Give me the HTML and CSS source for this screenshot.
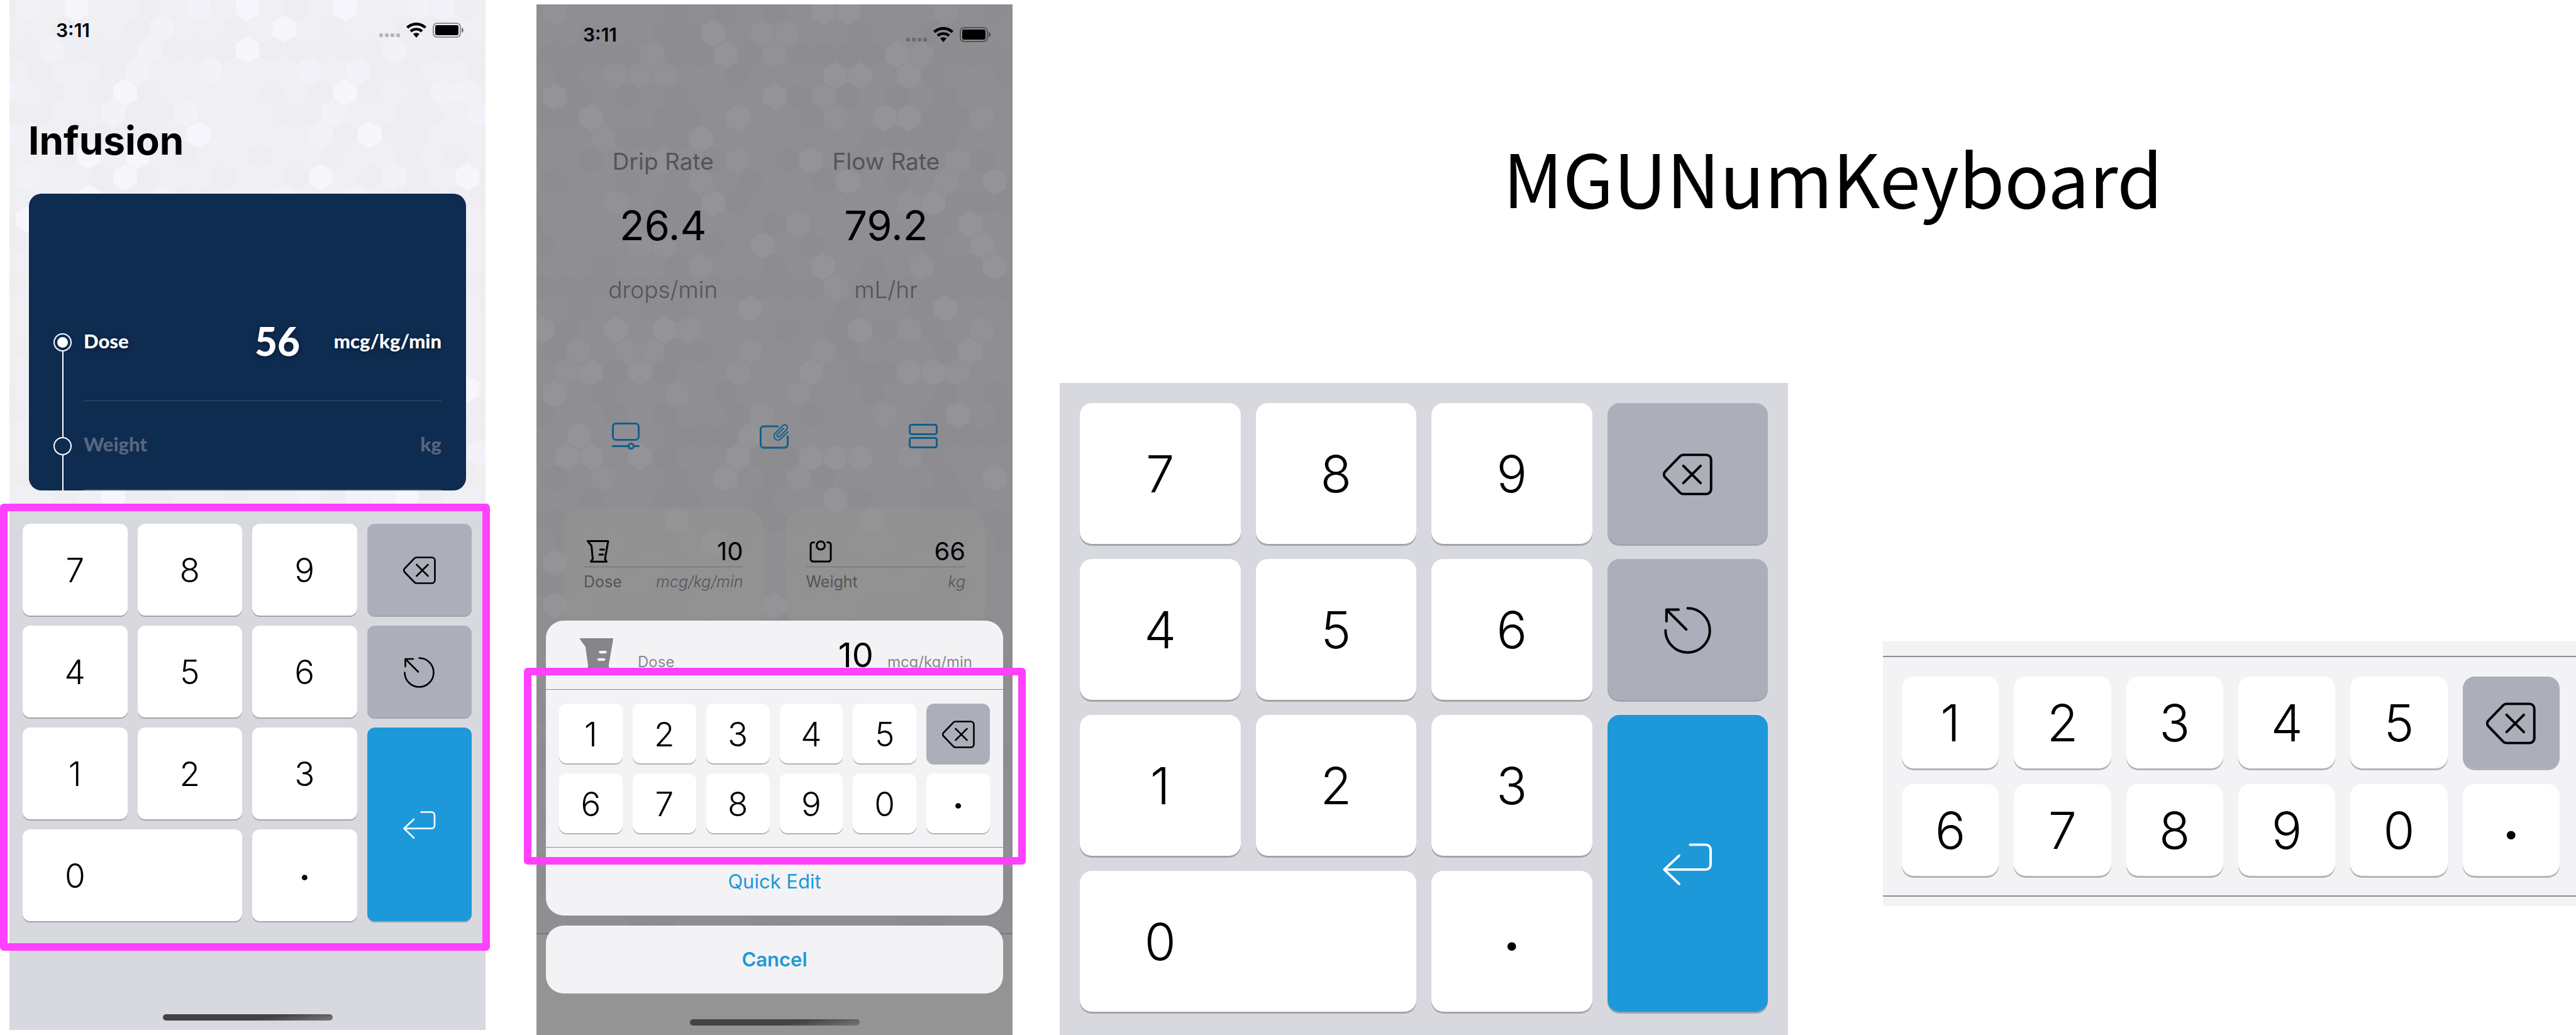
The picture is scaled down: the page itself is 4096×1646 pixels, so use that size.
FILE: index.html
```html
<!DOCTYPE html>
<html lang="en">
<head>
<meta charset="utf-8">
<meta name="viewport" content="width=device-width, initial-scale=1">
<title>MGUNumKeyboard</title>
<link rel="stylesheet" href="styles.css">
</head>
<body>
<svg class="sprite" aria-hidden="true">
  <symbol id="i-back" viewBox="0 0 52 44"><path stroke-width="2.6" d="M21.5 1.5H45.5a5 5 0 0 1 5 5V37.5a5 5 0 0 1-5 5H21.5a5 5 0 0 1-3.6-1.5L2.5 25a4 4 0 0 1 0-6L17.9 3A5 5 0 0 1 21.5 1.5ZM21.5 13l18 18M39.5 13l-18 18"/></symbol>
  <symbol id="i-reset" viewBox="0 0 49 49"><path stroke-width="2.6" d="M24.5 1.5a23 23 0 1 1-23 23M15 3H2.5V15M2.5 3L23 23.5"/></symbol>
  <symbol id="i-enter" viewBox="0 0 52 44"><path stroke-width="2.6" d="M28.5 1.5H45a5 5 0 0 1 5 5V22.5a5 5 0 0 1-5 5H1.5M17 13L1.5 27.5L17 42.5"/></symbol>
  <symbol id="i-wifi" viewBox="0 0 32 24"><path d="M16 0C9.8 0 4.2 2.4 0 6.3l3 3.2C6.5 6.3 11 4.4 16 4.4s9.5 1.9 13 5.1l3-3.2C27.8 2.4 22.2 0 16 0ZM16 8.2c-4 0-7.7 1.5-10.5 4l3 3.2c2-1.8 4.6-2.9 7.5-2.9s5.5 1.1 7.5 2.9l3-3.2c-2.8-2.5-6.500-4-10.500-4ZM16 16.3c-1.9 0-3.6.7-5 1.8L16 24l5-5.9c-1.4-1.1-3.1-1.8-5-1.8Z"/></symbol>
  <symbol id="i-battery" viewBox="0 0 50 24"><rect x="1" y="1" width="43" height="22" rx="6" fill="none" stroke="#000" stroke-opacity=".4" stroke-width="2"/><rect x="4" y="4" width="37" height="16" rx="3"/><path d="M46 8c4 1 4 7 0 8Z" fill-opacity=".5"/></symbol>
  <symbol id="i-monitor" viewBox="0 0 44 44"><rect x="1.5" y="1.5" width="41" height="26" rx="5"/><path d="M1.5 37.5H26M35 37.5H42.5"/><circle cx="30.5" cy="37.5" r="4"/></symbol>
  <symbol id="i-edit" viewBox="0 0 46 40"><path d="M29 4H6.500a5 5 0 0 0-5 5v24a5 5 0 0 0 5 5h33a5 5 0 0 0 5-5V20"/><path class="thin" d="M44.5 13L33.5 24a6.2 6.2 0 0 1-9-8.8L36.5 3a4.3 4.3 0 0 1 6.4 6L31.8 20.2a2.4 2.4 0 0 1-3.6-3.3L38 7.2"/></symbol>
  <symbol id="i-stack" viewBox="0 0 46 40"><rect x="1.5" y="1.5" width="43" height="15" rx="3"/><rect x="1.5" y="22.5" width="43" height="15" rx="3"/></symbol>
  <symbol id="i-beaker" viewBox="0 0 36 36"><path d="M1.5 1.5H34L29 30l2.5 4.2H6.5L9.5 30L7.5 9ZM21.5 15h6M20 23h6"/></symbol>
  <symbol id="i-beaker-solid" viewBox="0 0 36 36"><path d="M.5 0H35a1 1 0 0 1 1 1L31 30l2 5H7l2-5L6 9L0 1ZM22 13.5a1.5 1.5 0 0 0 0 3h5.5a1.5 1.5 0 0 0 0-3ZM20.5 21.5a1.5 1.5 0 0 0 0 3h5.5a1.5 1.5 0 0 0 0-3Z" fill-rule="evenodd"/></symbol>
  <symbol id="i-scale" viewBox="0 0 36 36"><path d="M7.5 3.5H6a4 4 0 0 0-4 4V30a4 4 0 0 0 4 4h24a4 4 0 0 0 4-4V7.5a4 4 0 0 0-4-4h-1.5"/><circle cx="18" cy="8.5" r="6.5"/></symbol>
</svg>

<main class="showcase">
  <section class="slot slot-first">
    <div class="phone phone-light">
      <svg class="hexes" data-pattern="light" viewBox="0 0 757 1638" preserveAspectRatio="xMidYMin slice" aria-hidden="true"></svg>
      <header class="status">
        <time>3:11</time>
        <span class="cell"><i></i><i></i><i></i><i></i></span>
        <svg class="wifi" aria-hidden="true"><use href="#i-wifi"/></svg>
        <svg class="battery" aria-hidden="true"><use href="#i-battery"/></svg>
      </header>
      <h2 class="screen-title">Infusion</h2>
      <ul class="steps">
        <li class="step step-first">
          <span class="marker"><i class="dot dot-on"></i></span>
          <div class="step-body"><span class="step-label">Dose</span><strong>56</strong><span>mcg/kg/min</span></div>
        </li>
        <li class="step step-idle">
          <span class="marker"><i class="dot"></i></span>
          <div class="step-body"><span class="step-label">Weight</span><span>kg</span></div>
        </li>
      </ul>
      <div class="dock">
        <div class="pad highlight highlight-pad">
          <button class="key">7</button><button class="key">8</button><button class="key">9</button>
          <button class="key key-gray" aria-label="Delete"><svg class="wide"><use href="#i-back"/></svg></button>
          <button class="key">4</button><button class="key">5</button><button class="key">6</button>
          <button class="key key-gray" aria-label="Reset"><svg class="round"><use href="#i-reset"/></svg></button>
          <button class="key">1</button><button class="key">2</button><button class="key">3</button>
          <button class="key key-enter" aria-label="Return"><svg class="wide"><use href="#i-enter"/></svg></button>
          <button class="key key-zero"><span>0</span></button><button class="key key-dot">·</button>
        </div>
        <div class="home"></div>
      </div>
    </div>
  </section>

  <section class="slot slot-second">
    <div class="phone phone-dim">
      <svg class="hexes" data-pattern="dim" viewBox="0 0 757 1638" preserveAspectRatio="xMidYMin slice" aria-hidden="true"></svg>
      <header class="status">
        <time>3:11</time>
        <span class="cell"><i></i><i></i><i></i><i></i></span>
        <svg class="wifi" aria-hidden="true"><use href="#i-wifi"/></svg>
        <svg class="battery" aria-hidden="true"><use href="#i-battery"/></svg>
      </header>
      <div class="rates">
        <div class="rate"><h3>Drip Rate</h3><b>26.4</b><p>drops/min</p></div>
        <div class="rate"><h3>Flow Rate</h3><b>79.2</b><p>mL/hr</p></div>
      </div>
      <nav class="tools">
        <button aria-label="Display"><svg><use href="#i-monitor"/></svg></button>
        <button aria-label="Attach note"><svg><use href="#i-edit"/></svg></button>
        <button aria-label="List"><svg><use href="#i-stack"/></svg></button>
      </nav>
      <div class="tiles">
        <div class="tile">
          <div class="tile-top"><svg aria-hidden="true"><use href="#i-beaker"/></svg><b>10</b></div>
          <div class="tile-foot"><span>Dose</span><em>mcg/kg/min</em></div>
        </div>
        <div class="tile">
          <div class="tile-top"><svg aria-hidden="true"><use href="#i-scale"/></svg><b>66</b></div>
          <div class="tile-foot"><span>Weight</span><em>kg</em></div>
        </div>
      </div>
      <div class="tabbar"></div>
      <div class="overlay">
        <div class="sheet">
          <div class="sheet-head">
            <svg aria-hidden="true"><use href="#i-beaker-solid"/></svg>
            <span class="sheet-label">Dose</span><b>10</b><span>mcg/kg/min</span>
          </div>
          <div class="strip highlight highlight-strip">
            <button class="key">1</button><button class="key">2</button><button class="key">3</button><button class="key">4</button><button class="key">5</button>
            <button class="key key-gray" aria-label="Delete"><svg class="wide"><use href="#i-back"/></svg></button>
            <button class="key">6</button><button class="key">7</button><button class="key">8</button><button class="key">9</button><button class="key">0</button><button class="key key-dot">·</button>
          </div>
          <button class="action">Quick Edit</button>
        </div>
        <button class="action action-cancel">Cancel</button>
        <div class="home"></div>
      </div>
    </div>
  </section>

  <section class="gallery">
    <h1>MGUNumKeyboard</h1>
    <div class="pad large">
      <button class="key">7</button><button class="key">8</button><button class="key">9</button>
      <button class="key key-gray" aria-label="Delete"><svg class="wide"><use href="#i-back"/></svg></button>
      <button class="key">4</button><button class="key">5</button><button class="key">6</button>
      <button class="key key-gray" aria-label="Reset"><svg class="round"><use href="#i-reset"/></svg></button>
      <button class="key">1</button><button class="key">2</button><button class="key">3</button>
      <button class="key key-enter" aria-label="Return"><svg class="wide"><use href="#i-enter"/></svg></button>
      <button class="key key-zero"><span>0</span></button><button class="key key-dot">·</button>
    </div>
    <div class="band">
      <div class="strip large">
        <button class="key">1</button><button class="key">2</button><button class="key">3</button><button class="key">4</button><button class="key">5</button>
        <button class="key key-gray" aria-label="Delete"><svg class="wide"><use href="#i-back"/></svg></button>
        <button class="key">6</button><button class="key">7</button><button class="key">8</button><button class="key">9</button><button class="key">0</button><button class="key key-dot">·</button>
      </div>
    </div>
  </section>
</main>
<script src="hexes.js"></script>
</body>
</html>
```
FILE: hexes.js
```js
// Honeycomb wallpaper. Each entry: row -> [soft columns, bright columns].
const patterns = {
  light: {
    0: [[0, 7, 16, 17], [2, 9, 13]],
    1: [[6], [11]],
    2: [[1, 5, 15], [9]],
    3: [[5, 8, 12, 14], []],
    4: [[-1, 17, 18], [4, 13]],
    5: [[4, 7, 13, 19], []],
    6: [[-1, 12], [7, 14]],
    7: [[], [3, 5]],
    8: [[0, 15], [4, 12, 18]],
    9: [[6, 11, 14], [3]],
    10: [[], [0]],
    18: [[], [18]],
    21: [[19], []],
    23: [[12, 14, 15], [4, 16]]
  },
  dim: {
    0: [[0, 16], [11, 12]],
    1: [[9, 10], [7]],
    2: [[4, 9, 15], [7, 14]],
    3: [[3, 4, 5], [12, 13, 15]],
    4: [[11], [0, 9]],
    5: [[12, 18], [2, 8, 14, 15]],
    6: [[2], [6]],
    7: [[5, 8, 17], [11]],
    8: [[6, 16], [12, 18]],
    9: [[3, 15], [7, 16]],
    10: [[10], [17]],
    11: [[4, 5], [9, 18]],
    12: [[6, 15], [11, 18]],
    13: [[12], []],
    14: [[], [8, 16]],
    15: [[6, 15, 18], [0, 3, 5, 13]],
    16: [[1, 3, 4, 8, 11], [17]],
    17: [[1, 8, 17], [2, 4, 11, 15, 16]],
    18: [[5, 10], [0]],
    19: [[9, 14], [17]],
    20: [[], [1, 8]],
    21: [[15], [1, 2, 4, 8, 11, 12, 13]],
    22: [[2, 10], [7, 18]],
    23: [[], [12]],
    24: [[], [5, 13]],
    25: [[], [7]],
    26: [[], [0]],
    28: [[], [0, 9]]
  }
};
const STEP_X = 38.84, STEP_Y = 33.7;

document.querySelectorAll('.hexes').forEach(svg => {
  const rows = patterns[svg.dataset.pattern];
  for (let r = 0; r < 50; r++) {
    const [soft, bright] = rows[r] || [[], []];
    for (let c = -1; c < 20; c++) {
      let tone = '';
      if (bright.includes(c)) tone = 'hex-bright';
      else if (soft.includes(c)) tone = 'hex-soft';
      else if ((r * 7 + c * 5 + r * c * 3) % 11 < 4) tone = 'hex-dark';
      if (!tone) continue;
      const x = (r % 2 ? 9.7 : 29) + c * STEP_X;
      const y = 12 + r * STEP_Y;
      const hex = document.createElementNS('http://www.w3.org/2000/svg', 'path');
      hex.setAttribute('d', `M${x} ${y - 21}l18.5 10.5v21l-18.5 10.5l-18.5-10.5v-21Z`);
      hex.setAttribute('class', tone);
      svg.append(hex);
    }
  }
});
```
FILE: styles.css
```css
* { box-sizing: border-box; margin: 0; padding: 0; }

:root {
  --pink: #ff40ff;
  --blue: #1d99d9;
  --tray: #d8d9de;
  --paper: #f3f3f5;
}

body {
  background: #fff;
  color: #000;
  font-family: Inter, "Liberation Sans", sans-serif;
}

button { border: 0; background: none; font: inherit; color: inherit; }
ul { list-style: none; }
svg { display: block; }
.sprite { position: absolute; width: 0; height: 0; }

.showcase {
  display: grid;
  grid-template-columns: 779fr 798fr 2411fr;
  column-gap: 54px;
  min-height: 100vh;
}

/* Phones */
.slot { display: flex; }
.slot-first { padding: 0 7px 8px 15px; }
.slot-second { padding: 7px 21px 0 20px; }

.phone {
  position: relative;
  flex: 1;
  display: flex;
  flex-direction: column;
}
.phone > * { position: relative; }
.phone > .hexes { position: absolute; inset: 0; width: 100%; height: 100%; }
.phone-light { background: #f0eff4; }
.phone-dim { background: #8f8e92; }

.phone-light .hex-bright { fill: #f7f6fc; }
.phone-light .hex-soft { fill: #f3f2f8; }
.phone-light .hex-dark { fill: #eeedf2; }
.phone-dim .hex-bright { fill: #949398; }
.phone-dim .hex-soft { fill: #929196; }
.phone-dim .hex-dark { fill: #8d8c90; }

.status {
  display: flex;
  align-items: center;
  padding: 30px 34px 0 74px;
  font-size: 30px;
  font-weight: 600;
  line-height: 36px;
}
.status time { flex: 1; }
.cell { display: flex; gap: 3px; padding-top: 16px; }
.cell i { width: 6px; height: 6px; border-radius: 2px; background: rgba(0, 0, 0, .24); }
.wifi { width: 32px; height: 24px; margin: 0 10px; }
.battery { width: 50px; height: 24px; }

.screen-title {
  padding: 120px 30px 46px;
  font-size: 62px;
  font-weight: 700;
  line-height: 76px;
}

.steps {
  margin: 0 31px;
  padding: 142px 39px 0;
  border-radius: 20px;
  background: #0e2b50;
  color: #fff;
  font-family: Lato, "Open Sans", sans-serif;
  font-size: 31px;
  font-weight: 900;
  overflow: hidden;
}
.step { display: flex; gap: 19px; height: 142px; }
.step-first { height: 188px; }
.marker { display: flex; flex-direction: column; align-items: center; }
.marker::before, .marker::after { content: ""; flex: 1; width: 2px; background: #fff; }
.step-first .marker::before { background: none; }
.dot { width: 29px; height: 29px; border: 2px solid #fff; border-radius: 50%; }
.dot-on { padding: 4px; background: #fff content-box; }
.step-body {
  flex: 1;
  display: flex;
  align-items: center;
  gap: 54px;
  padding-bottom: 4px;
  border-bottom: 1px solid #3c536f;
  text-shadow: 0 2px 6px rgba(0, 0, 0, .4);
}
.step-label { flex: 1; }
.step-body strong { font-size: 62px; font-weight: 900; line-height: 72px; }
.step-idle .step-body { border-bottom-width: 2px; color: #56677f; text-shadow: none; }

.dock {
  flex: 1;
  display: flex;
  flex-direction: column;
  margin-top: 28px;
  background: var(--tray);
}
.home {
  width: 270px;
  height: 10px;
  margin: auto auto 15px;
  border-radius: 5px;
  background: linear-gradient(170deg, #434347 60%, #77777b);
}

/* Keyboards */
.pad, .strip { display: grid; gap: 16px; }
.pad {
  grid-template-columns: repeat(4, 1fr);
  grid-auto-rows: 146px;
  padding: 25px 22px 40px 21px;
  background: var(--tray);
}
.strip {
  grid-template-columns: repeat(6, 1fr);
  grid-auto-rows: 95px;
  padding: 22px 21px;
  border: solid #8e8e93;
  border-width: 1px 0;
}
.key {
  display: flex;
  align-items: center;
  justify-content: center;
  padding-top: 2px;
  border-radius: 12px;
  background: #fff;
  box-shadow: 0 2px 0 #a3a4a9;
  font-size: 53px;
  font-weight: 300;
  line-height: 64px;
}
.strip .key { box-shadow: 0 2px 0 #b4b4b8; }
.key svg { fill: none; stroke: currentColor; stroke-linecap: round; stroke-linejoin: round; }
.key .wide { width: 52px; height: 44px; }
.key .round { width: 49px; height: 49px; }
.key-gray { background: #acaeba; }
.key-enter { grid-row: span 2; background: var(--blue); color: #fff; }
.key-zero { grid-column: span 2; display: grid; grid-template-columns: 1fr 1fr; column-gap: 16px; }
.key.key-dot { padding-top: 6px; font-weight: 700; }

.highlight { position: relative; }
.highlight::after {
  content: "";
  position: absolute;
  border: 12px solid var(--pink);
  border-radius: 6px;
  pointer-events: none;
}
.highlight-pad::after { inset: -7px -7px -7px -15px; }
.highlight-strip::after { inset: -35px -36px -28px -35px; }

.large { gap: 24px; }
.large .key { border-radius: 19px; box-shadow: 0 3px 0 #a3a4a9; font-size: 81px; line-height: 96px; }
.large .key.key-dot { padding-top: 14px; }
.large .wide { width: 79px; height: 67px; }
.large .round { width: 75px; height: 75px; }
.large .key-zero { column-gap: 24px; }
.pad.large { grid-auto-rows: 224px; padding: 32px 32px 37px; }
.strip.large { row-gap: 25px; grid-auto-rows: 146px; padding: 31px 26px 31px 30px; border-width: 2px 0; }
.strip.large .key { box-shadow: 0 3px 0 #b4b4b8; }

/* Dimmed screen */
.rates { display: grid; grid-template-columns: 1fr 1fr; padding: 160px 24px 0; text-align: center; }
.rate { display: grid; gap: 38px; color: #545458; font-size: 37px; line-height: 48px; }
.rate h3 { font: inherit; }
.rate b { color: #000; font-size: 65px; font-weight: 400; line-height: 80px; }
.rate p { font-weight: 300; }

.tools { display: grid; grid-template-columns: repeat(3, 1fr); justify-items: center; padding: 187px 24px 92px; }
.tools svg { width: 46px; height: 44px; fill: none; stroke: #135f8b; stroke-width: 3; stroke-linecap: round; }
.thin { stroke-width: 2; }

.tiles { display: grid; grid-template-columns: 1fr 1fr; gap: 36px; padding: 0 43px; }
.tile { padding: 45px 32px 60px; border-radius: 32px; background: rgba(150, 150, 148, .5); }
.tile-top { display: flex; align-items: center; justify-content: space-between; padding-left: 5px; border-bottom: 1px solid #707074; }
.tile-top svg { width: 36px; height: 36px; fill: none; stroke: #000; stroke-width: 3; stroke-linejoin: round; stroke-linecap: round; }
.tile-top b { font-size: 40px; font-weight: 400; line-height: 48px; }
.tile-foot { display: flex; justify-content: space-between; padding-top: 7px; color: #545458; font-size: 25px; line-height: 32px; }
.tile-foot em { font-weight: 300; }

.tabbar { height: 162px; margin-top: auto; border-top: 2px solid #79797c; background: #949495; }

.phone > .overlay {
  position: absolute;
  right: 15px;
  bottom: 0;
  left: 15px;
  display: flex;
  flex-direction: column;
}
.overlay .home { margin: 41px auto 15px; }
.sheet { border-radius: 28px; background: var(--paper); }
.sheet-head {
  display: flex;
  align-items: baseline;
  height: 109px;
  padding: 22px 49px 0 54px;
  color: #8a898e;
  font-size: 24px;
}
.sheet-head svg { align-self: flex-start; width: 53px; height: 53px; margin: 6px 39px 0 0; fill: #86858b; }
.sheet-label { flex: 1; }
.sheet-head b { margin-right: 22px; color: #000; font-size: 54px; font-weight: 400; line-height: 66px; }
.action { display: block; width: 100%; height: 108px; color: var(--blue); font-size: 31px; line-height: 40px; }
.action-cancel { margin-top: 16px; border-radius: 28px; background: var(--paper); font-weight: 600; }

/* Right-hand gallery */
.gallery {
  display: grid;
  grid-template-columns: 1158fr 1102fr;
  grid-template-rows: auto 1fr;
  column-gap: 151px;
  align-items: start;
}
.gallery h1 {
  grid-column: 1 / -1;
  padding: 200px 0 249px 48px;
  font-family: "Noto Sans CJK KR", "Noto Sans", sans-serif;
  font-size: 117px;
  font-weight: 400;
  line-height: 160px;
  text-align: center;
}
.band { margin-top: 411px; padding: 23px 0 15px; background: var(--paper); }
```
